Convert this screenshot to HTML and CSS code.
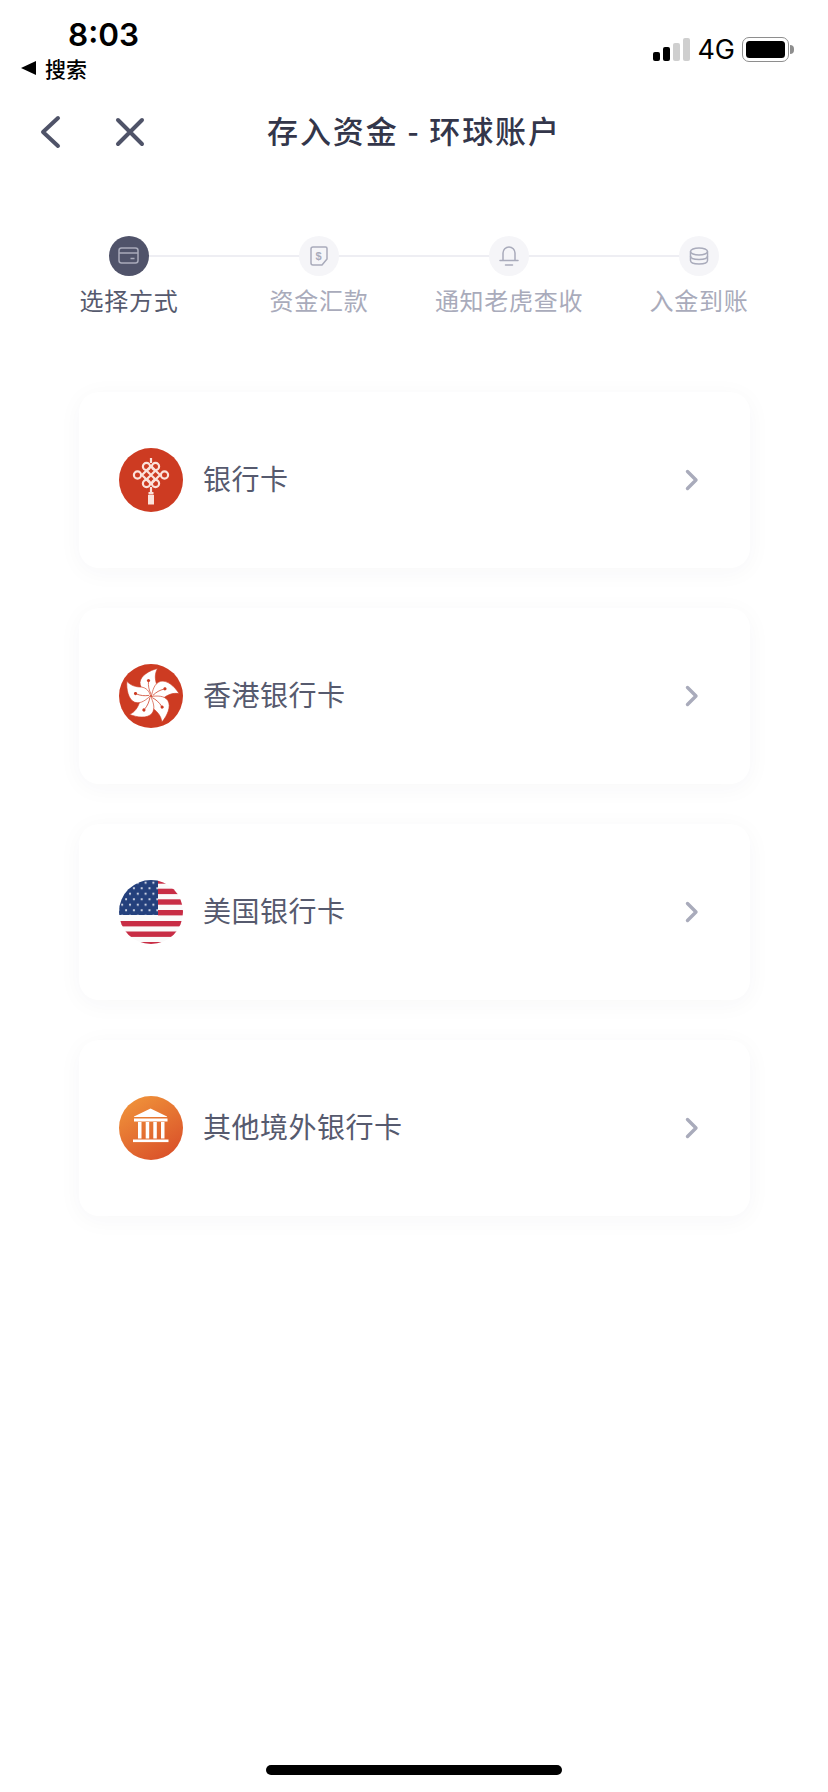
FILE: index.html
```html
<!DOCTYPE html>
<html lang="zh-CN">
<head>
    <meta charset="UTF-8">
    <meta name="viewport" content="width=device-width, initial-scale=1.0">
    <title>存入资金 - 环球账户</title>
    <link rel="stylesheet" href="styles.css">
</head>
<body>
    <div class="page">
        <div class="status-bar">
            <div class="status-left">
                <div class="time">8:03</div>
                <div class="back-app"><span class="back-arrow"></span>搜索</div>
            </div>
            <div class="status-right">
                <div class="signal">
                    <span class="bar bar-1"></span>
                    <span class="bar bar-2"></span>
                    <span class="bar bar-3 off"></span>
                    <span class="bar bar-4 off"></span>
                </div>
                <span class="network">4G</span>
                <div class="battery"><div class="battery-fill"></div></div>
                <div class="battery-tip"></div>
            </div>
        </div>

        <div class="nav">
            <svg class="nav-back" width="24" height="34" viewBox="0 0 24 34"><path d="M20 3 L5 17 L20 31" fill="none" stroke="#4f5368" stroke-width="4" stroke-linecap="round" stroke-linejoin="round"/></svg>
            <svg class="nav-close" width="30" height="30" viewBox="0 0 30 30"><path d="M3 3 L27 27 M27 3 L3 27" fill="none" stroke="#4f5368" stroke-width="4" stroke-linecap="round"/></svg>
            <h1>存入资金 - 环球账户</h1>
        </div>

        <div class="steps">
            <div class="step active">
                <div class="step-icon">
                    <svg width="22" height="18" viewBox="0 0 22 18"><g fill="none" stroke="#a9abbb" stroke-width="1.5"><rect x="1" y="1" width="19" height="15" rx="2.5"/><path d="M1 6 H20 M12.5 11.5 H16.5"/></g></svg>
                </div>
                <div class="step-label">选择方式</div>
            </div>
            <div class="step">
                <div class="step-icon">
                    <svg width="18" height="20" viewBox="0 0 18 20"><path d="M3 1 H15.5 Q17 1 17 2.5 V13 L12 19 H3 Q1 19 1 17 V3 Q1 1 3 1 Z" fill="none" stroke="#a9abbb" stroke-width="1.5" stroke-linejoin="round"/><text x="8.5" y="14" class="dollar">$</text></svg>
                </div>
                <div class="step-label">资金汇款</div>
            </div>
            <div class="step">
                <div class="step-icon">
                    <svg width="20" height="22" viewBox="0 0 20 22"><g fill="none" stroke="#a9abbb" stroke-width="1.5" stroke-linecap="round"><path d="M4 15 V8 A6 6 0 0 1 16 8 V15"/><path d="M1 15.5 H19 M6.5 20 H13.5"/></g></svg>
                </div>
                <div class="step-label">通知老虎查收</div>
            </div>
            <div class="step">
                <div class="step-icon">
                    <svg width="20" height="18" viewBox="0 0 20 18"><g fill="none" stroke="#a9abbb" stroke-width="1.5"><ellipse cx="10" cy="4.5" rx="8.5" ry="3.5"/><path d="M1.5 4.5 V13.5 C1.5 15.5 5 17 10 17 C15 17 18.5 15.5 18.5 13.5 V4.5"/><path d="M1.5 9 C1.5 11 5 12.5 10 12.5 C15 12.5 18.5 11 18.5 9"/></g></svg>
                </div>
                <div class="step-label">入金到账</div>
            </div>
        </div>

        <div class="cards">
            <div class="card">
                <svg class="logo" width="64" height="64" viewBox="0 0 64 64">
                    <circle cx="32" cy="32" r="32" fill="#cd3b22"/>
                    <g fill="none" stroke="#fbe2db" stroke-width="2.2">
                        <path d="M32 10 V15 M32 39 V46"/>
                        <circle cx="27.5" cy="18.5" r="3.6"/>
                        <circle cx="36.5" cy="18.5" r="3.6"/>
                        <circle cx="27.5" cy="35.5" r="3.6"/>
                        <circle cx="36.5" cy="35.5" r="3.6"/>
                        <circle cx="18.5" cy="27" r="3.6"/>
                        <circle cx="45.5" cy="27" r="3.6"/>
                        <path d="M23 27 L32 18 L41 27 L32 36 Z M27.5 22.5 L36.5 31.5 M36.5 22.5 L27.5 31.5"/>
                    </g>
                    <rect x="29.5" y="44" width="5" height="2.5" fill="#fbe2db"/>
                    <rect x="29" y="47" width="6" height="9.5" fill="#fbe2db"/>
                </svg>
                <span class="card-label">银行卡</span>
                <svg class="chevron" width="14" height="22" viewBox="0 0 14 22"><path d="M2.5 2.5 L11 11 L2.5 19.5" fill="none" stroke="#a9abbb" stroke-width="3.4" stroke-linecap="round" stroke-linejoin="round"/></svg>
            </div>

            <div class="card">
                <svg class="logo" width="64" height="64" viewBox="0 0 64 64">
                    <defs>
                        <g id="petal">
                            <path d="M32 31.5 C27 28.5 21 25 21 18.5 C21.5 11.5 30.5 6.5 38.5 4.5 C35.5 10 36 15 37.5 20 C38.5 25 36 29 32 31.5 Z" fill="#fff" stroke="#cd3b22" stroke-width=".6"/>
                            <path d="M32 30 C30 26 29 22 29.5 17" fill="none" stroke="#cd3b22" stroke-width=".7"/>
                            <circle cx="29.5" cy="16.5" r="1.6" fill="#cd3b22"/>
                        </g>
                    </defs>
                    <circle cx="32" cy="32" r="32" fill="#cd3b22"/>
                    <use href="#petal"/>
                    <use href="#petal" transform="rotate(72 32 32)"/>
                    <use href="#petal" transform="rotate(144 32 32)"/>
                    <use href="#petal" transform="rotate(216 32 32)"/>
                    <use href="#petal" transform="rotate(288 32 32)"/>
                </svg>
                <span class="card-label">香港银行卡</span>
                <svg class="chevron" width="14" height="22" viewBox="0 0 14 22"><path d="M2.5 2.5 L11 11 L2.5 19.5" fill="none" stroke="#a9abbb" stroke-width="3.4" stroke-linecap="round" stroke-linejoin="round"/></svg>
            </div>

            <div class="card">
                <svg class="logo" width="64" height="64" viewBox="0 0 64 64">
                    <defs>
                        <clipPath id="round"><circle cx="32" cy="32" r="32"/></clipPath>
                        <pattern id="stars" width="7.8" height="11" patternUnits="userSpaceOnUse" x="1.2" y="0.2">
                            <rect width="7.8" height="11" fill="#24407c"/>
                            <circle cx="2" cy="2.6" r="1.05" fill="#e6e9f2"/>
                            <circle cx="5.9" cy="8.1" r="1.05" fill="#e6e9f2"/>
                        </pattern>
                    </defs>
                    <g clip-path="url(#round)">
                        <rect width="64" height="64" fill="#fbfafa"/>
                        <g fill="#c82d45">
                            <rect x="39" y="-2" width="25" height="5.7"/>
                            <rect x="39" y="8.7" width="25" height="5.4"/>
                            <rect x="39" y="19.3" width="25" height="5.4"/>
                            <rect x="39" y="30" width="25" height="5.4"/>
                            <rect y="41" width="64" height="5.4"/>
                            <rect y="51.5" width="64" height="5.4"/>
                            <rect y="62" width="64" height="3"/>
                        </g>
                        <rect width="39" height="35" fill="url(#stars)"/>
                    </g>
                </svg>
                <span class="card-label">美国银行卡</span>
                <svg class="chevron" width="14" height="22" viewBox="0 0 14 22"><path d="M2.5 2.5 L11 11 L2.5 19.5" fill="none" stroke="#a9abbb" stroke-width="3.4" stroke-linecap="round" stroke-linejoin="round"/></svg>
            </div>

            <div class="card">
                <svg class="logo" width="64" height="64" viewBox="0 0 64 64">
                    <defs>
                        <linearGradient id="orange" x1="0.2" y1="0" x2="0.8" y2="1">
                            <stop offset="0" stop-color="#f0933a"/>
                            <stop offset="1" stop-color="#d94f29"/>
                        </linearGradient>
                    </defs>
                    <circle cx="32" cy="32" r="32" fill="url(#orange)"/>
                    <g fill="#fff">
                        <path d="M31.5 12.5 L48 20.5 V21 H15 V20.5 Z"/>
                        <rect x="15" y="22.5" width="33.5" height="3"/>
                        <rect x="19" y="26" width="3.5" height="16.5"/>
                        <rect x="26.7" y="26" width="3.5" height="16.5"/>
                        <rect x="34.3" y="26" width="3.5" height="16.5"/>
                        <rect x="42" y="26" width="3.5" height="16.5"/>
                        <rect x="14" y="43.5" width="35.5" height="2.6"/>
                    </g>
                </svg>
                <span class="card-label">其他境外银行卡</span>
                <svg class="chevron" width="14" height="22" viewBox="0 0 14 22"><path d="M2.5 2.5 L11 11 L2.5 19.5" fill="none" stroke="#a9abbb" stroke-width="3.4" stroke-linecap="round" stroke-linejoin="round"/></svg>
            </div>
        </div>

        <div class="home-bar"></div>
    </div>
</body>
</html>
```

FILE: styles.css
```css
* {
    box-sizing: border-box;
}

body {
    margin: 0;
    padding: 0;
    background-color: #fff;
    font-family: "Noto Sans CJK SC", "Noto Sans", sans-serif;
}

.page {
    width: 828px;
    height: 1792px;
    display: flex;
    flex-direction: column;
    overflow: hidden;
}

.status-bar {
    height: 88px;
    display: flex;
    justify-content: space-between;
    padding: 15px 34px 0 21px;
}

.time {
    margin-left: 47px;
    font-family: Inter, sans-serif;
    font-size: 31.5px;
    font-weight: 600;
    line-height: 40px;
    color: #000;
}

.back-app {
    display: flex;
    align-items: center;
    gap: 9px;
    height: 26px;
    font-size: 21px;
    font-weight: 500;
    line-height: 26px;
    color: #000;
}

.back-arrow {
    width: 0;
    height: 0;
    border-top: 7.5px solid transparent;
    border-bottom: 7.5px solid transparent;
    border-right: 15px solid #000;
}

.status-right {
    display: flex;
    align-items: center;
    height: 35px;
    margin-top: 17px;
}

.signal {
    display: flex;
    align-items: flex-end;
    gap: 3px;
    height: 23px;
}

.bar {
    width: 7px;
    border-radius: 2px;
    background-color: #000;
}

.bar.off {
    background-color: #cfcfcf;
}

.bar-1 {
    height: 9px;
}

.bar-2 {
    height: 14px;
}

.bar-3 {
    height: 18px;
}

.bar-4 {
    height: 23px;
}

.network {
    margin-left: 7px;
    font-family: Inter, sans-serif;
    font-size: 27px;
    line-height: 24px;
    color: #000;
}

.battery {
    width: 47px;
    height: 25px;
    margin-left: 7px;
    padding: 3px;
    border: 1.5px solid #8e8e8e;
    border-radius: 7px;
}

.battery-fill {
    width: 100%;
    height: 100%;
    background-color: #000;
    border-radius: 3.5px;
}

.battery-tip {
    width: 4px;
    height: 9px;
    margin-left: 1px;
    background-color: #8e8e8e;
    border-radius: 0 4px 4px 0;
}

.nav {
    height: 88px;
    display: flex;
    align-items: center;
    padding-left: 38px;
}

.nav-close {
    margin-left: 53px;
}

.nav h1 {
    margin: -6px 0 0 122px;
    font-size: 31px;
    font-weight: 500;
    letter-spacing: 1.9px;
    color: #33364a;
    white-space: nowrap;
}

.steps {
    display: grid;
    grid-template-columns: repeat(4, 190px);
    margin: 60px 0 0 34px;
}

.step {
    position: relative;
    display: flex;
    flex-direction: column;
    align-items: center;
}

/* line between the circles, sits behind the next one */
.step:not(:last-child)::after {
    content: "";
    position: absolute;
    top: 19px;
    left: 95px;
    width: 190px;
    height: 2px;
    background-color: #eeeef3;
}

.step-icon {
    position: relative;
    z-index: 1;
    width: 40px;
    height: 40px;
    display: flex;
    align-items: center;
    justify-content: center;
    border-radius: 50%;
    background-color: #f5f5f8;
}

.step.active .step-icon {
    background-color: #50536a;
}

.dollar {
    font-family: "Liberation Sans", sans-serif;
    font-size: 11px;
    font-weight: 700;
    text-anchor: middle;
    fill: #a9abbb;
}

.step-label {
    margin-top: 6px;
    font-size: 24px;
    line-height: 36px;
    letter-spacing: 0.7px;
    color: #a9abbb;
    white-space: nowrap;
}

.step.active .step-label {
    color: #565a6e;
}

.cards {
    display: flex;
    flex-direction: column;
    gap: 40px;
    margin: 74px 0 0 79px;
    width: 671px;
}

.card {
    height: 176px;
    display: flex;
    align-items: center;
    padding: 0 51px 0 40px;
    background-color: #fff;
    border-radius: 20px;
    box-shadow: 0 4px 24px rgba(40, 40, 70, 0.04);
}

.logo {
    flex-shrink: 0;
}

.card-label {
    flex: 1;
    margin: -4px 0 0 20px;
    font-size: 28px;
    letter-spacing: 0.5px;
    color: #565a6e;
}

.home-bar {
    width: 296px;
    height: 10px;
    margin: auto auto 17px;
    background-color: #000;
    border-radius: 5px;
}
```
